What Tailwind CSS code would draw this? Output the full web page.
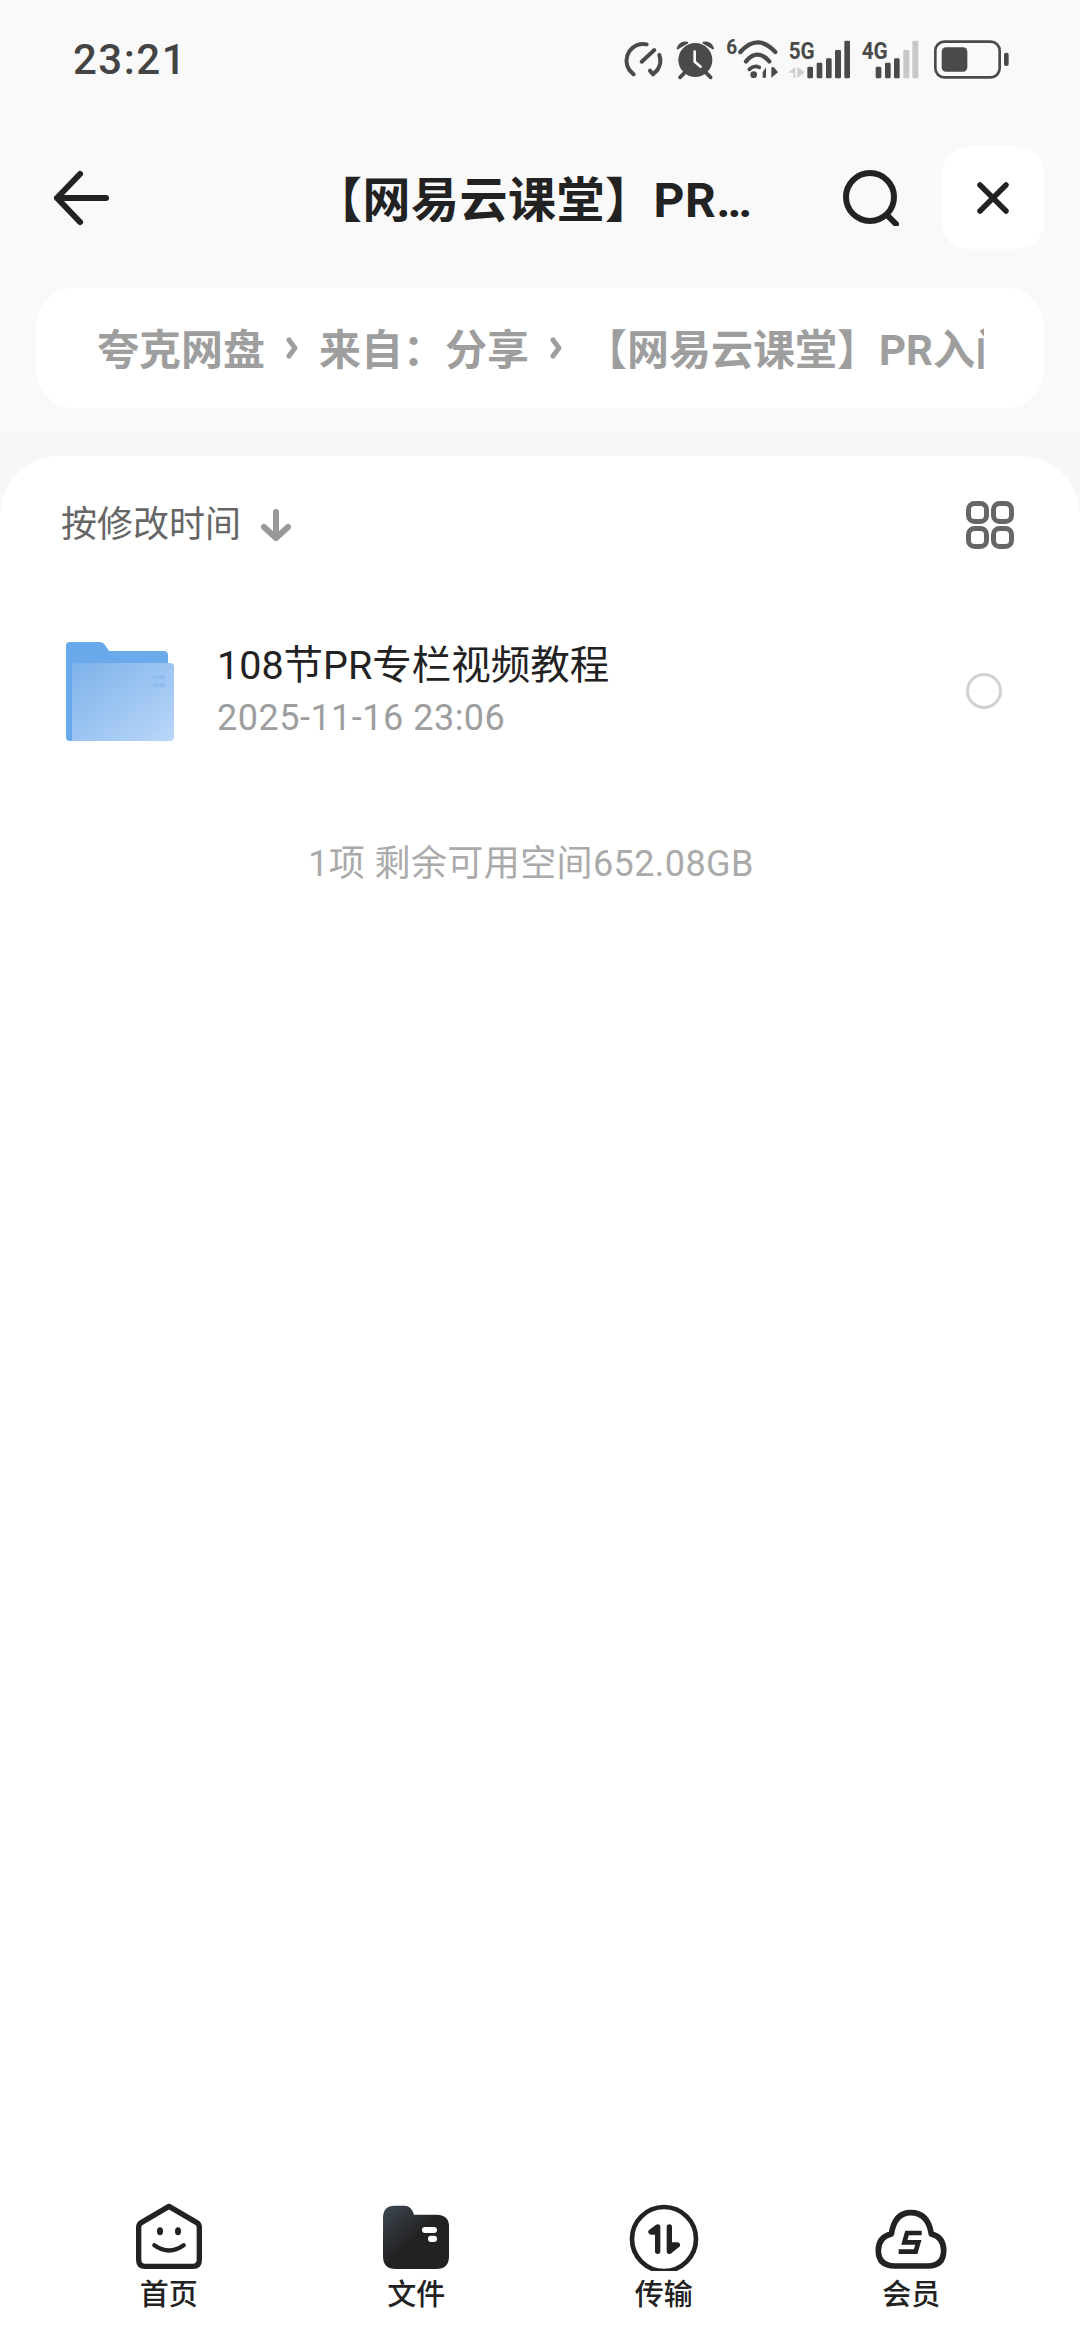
<!DOCTYPE html>
<html lang="zh-CN">

<head>
    <meta charset="UTF-8" />
    <meta name="viewport" content="width=device-width, initial-scale=1.0" />
    <title>夸克网盘</title>
    <script src="https://cdn.jsdelivr.net/npm/@tailwindcss/browser@4"></script>
</head>

<body class="bg-[#f9f9f9] font-['Roboto','Noto_Sans_CJK_SC',sans-serif]">
    <div class="w-[1080px] h-[2340px] flex flex-col overflow-hidden bg-linear-to-b from-[#f9f9f9] from-[17.5%] to-[#f6f7f8] to-[19.5%]">

        <!-- Status bar -->
        <div class="h-[120px] shrink-0 flex items-center justify-between">
            <span class="ml-[73px] text-[42px] leading-none font-medium tracking-[1.5px] text-[#444]">23:21</span>
            <svg class="w-[440px] h-[80px] mr-[40px]" viewBox="0 0 1320 240">
                <!-- speed -->
                <path d="M101 163 L88 150 A50 50 0 0 1 140 73 M178 105 A50 50 0 0 1 172 150 L159 163 L150 152" fill="none" stroke="#4a4a4a" stroke-width="12" stroke-linecap="round" stroke-linejoin="round" />
                <path d="M125 125 L163 90" stroke="#4a4a4a" stroke-width="12" stroke-linecap="round" />
                <!-- alarm -->
                <circle cx="286" cy="120" r="51" fill="#4a4a4a" />
                <path d="M233 85 Q240 64 262 68 Z M339 85 Q332 64 310 68 Z" fill="#4a4a4a" stroke="#4a4a4a" stroke-width="6" stroke-linejoin="round" />
                <path d="M252 160 L240 172 M320 160 L332 172" stroke="#4a4a4a" stroke-width="11" stroke-linecap="round" />
                <path d="M284 95 V125 L302 140" fill="none" stroke="#f9f9f9" stroke-width="8" stroke-linecap="round" stroke-linejoin="round" />
                <!-- wifi -->
                <text x="379" y="102" font-size="60" font-weight="700" fill="#4a4a4a" textLength="33" lengthAdjust="spacingAndGlyphs">6</text>
                <path d="M421 96 Q472 38 526 96 M438 124 Q472 84 508 124" fill="none" stroke="#4a4a4a" stroke-width="13" stroke-linecap="round" />
                <path d="M448 148 Q462 134 478 142" fill="none" stroke="#4a4a4a" stroke-width="11" stroke-linecap="round" />
                <circle cx="461" cy="164" r="10" fill="#4a4a4a" />
                <path d="M498 142 V173 H488 V157 Z M514 142 V173 L534 157 L522 142 Z" fill="#4a4a4a" />
                <!-- 5G -->
                <text x="566" y="118" font-size="70" font-weight="700" fill="#4a4a4a" textLength="78" lengthAdjust="spacingAndGlyphs">5G</text>
                <path d="M586 140 V174 H580 V158 H564 Z M592 140 V174 L614 157 Z" fill="#cfcfcf" />
                <rect x="622" y="140" width="17" height="35" rx="4" fill="#4a4a4a" />
                <rect x="650" y="128" width="17" height="47" rx="4" fill="#4a4a4a" />
                <rect x="678" y="115" width="17" height="60" rx="4" fill="#4a4a4a" />
                <rect x="705" y="90" width="18" height="85" rx="4" fill="#4a4a4a" />
                <rect x="733" y="62" width="17" height="113" rx="4" fill="#4a4a4a" />
                <!-- 4G -->
                <text x="785" y="118" font-size="70" font-weight="700" fill="#4a4a4a" textLength="78" lengthAdjust="spacingAndGlyphs">4G</text>
                <rect x="827" y="140" width="17" height="35" rx="4" fill="#4a4a4a" />
                <rect x="855" y="128" width="17" height="47" rx="4" fill="#4a4a4a" />
                <rect x="882" y="115" width="17" height="60" rx="4" fill="#4a4a4a" />
                <rect x="910" y="90" width="18" height="85" rx="4" fill="#c8c8c8" />
                <rect x="937" y="62" width="18" height="113" rx="4" fill="#c8c8c8" />
                <!-- battery -->
                <rect x="1006" y="65" width="193" height="107" rx="27" fill="none" stroke="#4a4a4a" stroke-width="8" />
                <rect x="1025" y="82" width="77" height="73" rx="13" fill="#4a4a4a" />
                <rect x="1212" y="98" width="14" height="40" rx="6" fill="#4a4a4a" />
            </svg>
        </div>

        <!-- Header -->
        <div class="mt-[27px] h-[102px] shrink-0 flex items-center">
            <svg class="ml-[52px] w-[58px] h-[58px] shrink-0" viewBox="0 0 58 58" fill="none" stroke="#222" stroke-width="6" stroke-linecap="round" stroke-linejoin="round">
                <path d="M5 29 H54 M28 5 L5 29 L28 53" />
            </svg>
            <div class="ml-[204px] w-[529px] shrink-0 pt-[5px] text-[48px] leading-[60px] font-bold tracking-[0.5px] text-[#222] whitespace-nowrap">【网易云课堂】PR…</div>
            <svg class="w-[56px] h-[56px] shrink-0" viewBox="0 0 56 56" fill="none" stroke="#222" stroke-width="6" stroke-linecap="round">
                <circle cx="27" cy="27" r="24" />
                <path d="M44 45 L53 54" />
            </svg>
            <div class="ml-[43px] w-[102px] h-[102px] shrink-0 bg-white rounded-[26px] flex items-center justify-center">
                <svg class="w-[32px] h-[32px]" viewBox="0 0 32 32" fill="none" stroke="#222" stroke-width="5.5" stroke-linecap="round">
                    <path d="M3 3 L29 29 M29 3 L3 29" />
                </svg>
            </div>
        </div>

        <!-- Breadcrumb -->
        <div class="mt-[39px] mx-[36px] h-[120px] shrink-0 bg-white rounded-[38px] flex items-center pl-[61px] pr-[60px]">
            <div class="pt-[5px] flex items-center w-full overflow-hidden whitespace-nowrap text-[42px] leading-[60px] font-bold text-[#9e9e9e]">
                <span class="shrink-0">夸克网盘</span>
                <svg class="mx-[21px] -mt-[6px] w-[12px] h-[22px] shrink-0" viewBox="0 0 12 22" fill="none" stroke="#9e9e9e" stroke-width="5" stroke-linecap="round" stroke-linejoin="round">
                    <path d="M3 3 L9 11 L3 19" />
                </svg>
                <span class="shrink-0">来自：分享</span>
                <svg class="mx-[21px] -mt-[6px] w-[12px] h-[22px] shrink-0" viewBox="0 0 12 22" fill="none" stroke="#9e9e9e" stroke-width="5" stroke-linecap="round" stroke-linejoin="round">
                    <path d="M3 3 L9 11 L3 19" />
                </svg>
                <span class="shrink-0 ml-[2px]">【网易云课堂】PR入门到精通</span>
            </div>
        </div>

        <!-- Sheet -->
        <div class="mt-[48px] flex-1 bg-white rounded-t-[60px] flex flex-col">
            <!-- Sort row -->
            <div class="h-[138px] shrink-0 flex items-center justify-between pl-[61px] pr-[66px]">
                <div class="flex items-center">
                    <span class="text-[36px] leading-none text-[#666]">按修改时间</span>
                    <svg class="ml-[20px] w-[30px] h-[32px]" viewBox="0 0 30 32" fill="none" stroke="#999" stroke-width="6" stroke-linecap="round" stroke-linejoin="round">
                        <path d="M15 3 V28 M3 18 L15 29 L27 18" />
                    </svg>
                </div>
                <svg class="w-[48px] h-[48px]" viewBox="0 0 48 48" fill="none" stroke="#666" stroke-width="5">
                    <rect x="2.5" y="2.5" width="18" height="18" rx="6" />
                    <rect x="27.5" y="2.5" width="18" height="18" rx="6" />
                    <rect x="2.5" y="27.5" width="18" height="18" rx="6" />
                    <rect x="27.5" y="27.5" width="18" height="18" rx="6" />
                </svg>
            </div>

            <!-- File row -->
            <div class="h-[194px] shrink-0 flex items-center pl-[66px] pr-[78px]">
                <svg class="w-[108px] h-[99px] shrink-0" viewBox="0 0 108 99">
                    <defs>
                        <linearGradient id="folderFront" x1="0" y1="0" x2="1" y2="1">
                            <stop offset="0" stop-color="#7db2ea" />
                            <stop offset="1" stop-color="#bad7f9" />
                        </linearGradient>
                    </defs>
                    <path d="M4 0 H33 Q37 0 39 3 L43 9 H98 Q102 9 102 13 V99 H4 Q0 99 0 95 V4 Q0 0 4 0 Z" fill="#6aa9ea" />
                    <path d="M9 21 H104 Q108 21 108 25 V95 Q108 99 104 99 H6 V24 Q6 21 9 21 Z" fill="url(#folderFront)" />
                    <rect x="87" y="33" width="12" height="4" fill="#8fbdf0" />
                    <rect x="87" y="41" width="12" height="4" fill="#8fbdf0" />
                </svg>
                <div class="ml-[43px] flex-1 flex flex-col">
                    <span class="text-[39.5px] leading-[44px] text-[#222]">108节PR专栏视频教程</span>
                    <span class="mt-[10px] text-[36px] leading-[40px] tracking-[0.5px] text-[#9e9e9e]">2025-11-16 23:06</span>
                </div>
                <div class="w-[36px] h-[36px] shrink-0 rounded-full border-[3px] border-[#d0d2d6]"></div>
            </div>

            <!-- Summary -->
            <div class="mt-[54px] mr-[18px] text-center text-[36px] leading-[44px] tracking-[0.4px] text-[#aaa]">1项 剩余可用空间652.08GB</div>

            <!-- Bottom nav -->
            <nav class="mt-auto h-[142px] shrink-0 grid grid-cols-4 px-[45px] text-[29px] leading-[32px] font-medium text-[#222]">
                <a class="flex flex-col items-center" href="#">
                    <svg class="mt-[1px] w-[72px] h-[72px]" viewBox="98 58 216 216" fill="none" stroke="#222" stroke-width="16" stroke-linecap="round" stroke-linejoin="round">
                        <path d="M206 80 L288 128 Q297 133 297 143 V240 Q297 260 277 260 H135 Q115 260 115 240 V143 Q115 133 124 128 Z" />
                        <path d="M162 197 Q206 228 250 197" stroke-width="13" />
                        <ellipse cx="179" cy="155" rx="9" ry="12" fill="#222" stroke="none" />
                        <ellipse cx="233" cy="155" rx="9" ry="12" fill="#222" stroke="none" />
                    </svg>
                    <span class="mt-[8px]">首页</span>
                </a>
                <a class="flex flex-col items-center" href="#">
                    <svg class="mt-[1px] w-[72px] h-[72px]" viewBox="841 58 216 216">
                        <defs>
                            <linearGradient id="fileTab" x1="0" y1="0" x2="1" y2="1">
                                <stop offset="0" stop-color="#3f4852" />
                                <stop offset="0.5" stop-color="#222" />
                                <stop offset="1" stop-color="#222" />
                            </linearGradient>
                        </defs>
                        <path d="M885 78 H915 Q935 78 943 105 H1010 Q1048 105 1048 140 V230 Q1048 268 1010 268 H888 Q850 268 850 230 V115 Q850 78 885 78 Z" fill="url(#fileTab)" />
                        <rect x="967" y="142" width="45" height="18" rx="9" fill="#fff" />
                        <rect x="985" y="168" width="27" height="19" rx="9" fill="#fff" />
                    </svg>
                    <span class="mt-[8px]">文件</span>
                </a>
                <a class="flex flex-col items-center" href="#">
                    <svg class="mt-[1px] w-[72px] h-[72px]" viewBox="83 58 216 216" fill="none" stroke="#222" stroke-linecap="round" stroke-linejoin="round">
                        <circle cx="191" cy="178" r="96" stroke-width="14" />
                        <path d="M172 215 V142 L152 157 H172" stroke-width="16" fill="#222" />
                        <path d="M207 142 V215 L231 196 H207" stroke-width="16" fill="#222" />
                    </svg>
                    <span class="mt-[8px]">传输</span>
                </a>
                <a class="flex flex-col items-center" href="#">
                    <svg class="mt-[1px] w-[72px] h-[72px]" viewBox="826 58 216 216" fill="none" stroke="#222" stroke-width="17" stroke-linejoin="round">
                        <path d="M885 259 Q836 259 836 212 Q836 172 875 163 Q885 99 933 99 Q985 99 995 163 Q1032 172 1032 212 Q1032 259 985 259 Z" />
                        <path d="M966 160 H922 L914 188 H956 L948 216 H897" stroke-width="14" stroke-linejoin="miter" />
                    </svg>
                    <span class="mt-[8px]">会员</span>
                </a>
            </nav>
        </div>

    </div>
</body>

</html>
